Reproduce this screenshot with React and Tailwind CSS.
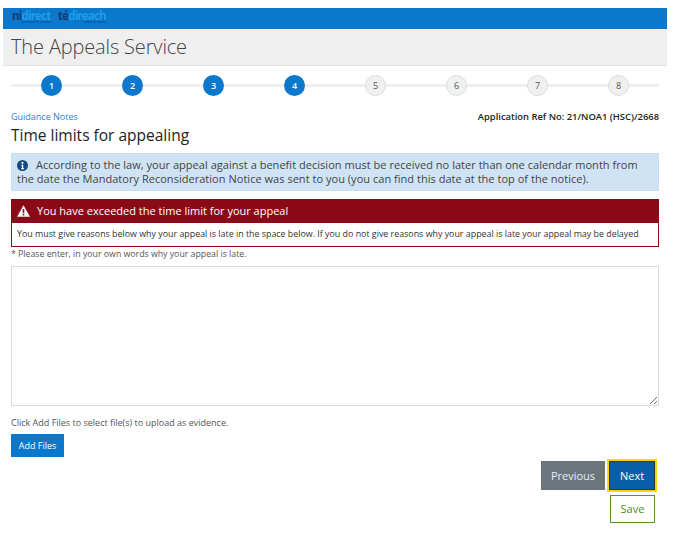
import React from 'react';

const steps = [1, 2, 3, 4, 5, 6, 7, 8];

const Step = ({ n }) => {
  const done = n <= 4;
  return (
    <div className="w-[81px] flex justify-center">
      <div
        className={
          done
            ? 'w-[21px] h-[21px] rounded-full bg-[#0b78cc] text-white text-[9px] font-semibold flex items-center justify-center'
            : 'w-[21px] h-[21px] rounded-full bg-[#f0f0f0] border border-[#dcdcdc] text-[#555] text-[9px] flex items-center justify-center'
        }
      >
        {n}
      </div>
    </div>
  );
};

const Logo = () => (
  <div className="flex items-start h-[21px] pl-[9px] pt-[3px] font-bold text-[11.5px] tracking-[-0.8px]">
    <div className="flex flex-col w-[39px]">
      <div className="flex leading-[10px] h-[10px]">
        <span className="text-[#14397a]">ni</span>
        <span className="text-[#1c9fe6]">direct</span>
      </div>
      <span className="text-[3px] leading-[3px] tracking-normal font-normal text-[#14397a] text-right">government services</span>
    </div>
    <div className="w-px h-[13px] bg-[#2a6fb5] mx-[3px]" />
    <div className="flex flex-col w-[48px]">
      <div className="flex leading-[10px] h-[10px]">
        <span className="text-[#14397a]">té</span>
        <span className="text-[#1c9fe6]">direach</span>
      </div>
      <span className="text-[3px] leading-[3px] tracking-normal font-normal text-[#14397a] text-right">seirbhísí rialtais</span>
    </div>
  </div>
);

export default function App() {
  return (
    <div className="bg-white min-h-[540px] pl-[3px] pt-2 pr-[6px] font-['Open_Sans',sans-serif] text-[#333]">
      <div className="bg-[#0b78cc]">
        <Logo />
      </div>
      <div className="bg-[#efefef] border-b border-[#e0e0e0] h-[37px] pl-[8px] flex items-center">
        <h1 className="text-[20px] font-light text-[#444] leading-none tracking-[-0.15px]">The Appeals Service</h1>
      </div>

      <div className="px-2">
        <div className="relative mt-[9px] flex">
          <div className="absolute left-0 right-0 top-[9px] h-[3px] bg-[#efefef]" />
          <div className="relative flex">
            {steps.map((n) => (
              <Step key={n} n={n} />
            ))}
          </div>
        </div>

        <div className="mt-[14px] flex justify-between items-center h-[14px]">
          <a className="text-[#2f7fd1] text-[9px]">Guidance Notes</a>
          <span className="text-[9.4px] font-semibold text-[#222]">Application Ref No: 21/NOA1 (HSC)/2668</span>
        </div>
        <h2 className="text-[15.5px] leading-[20px] text-[#222] mt-[1px]">Time limits for appealing</h2>

        <div className="mt-[8px] h-[38px] bg-[#cfe3f5] border border-[#c5dff3] pl-[5px] pt-[4px] text-[11px] leading-[14px] text-[#444] tracking-[0.03px]">
          <div className="flex items-center">
            <svg className="w-[11px] h-[11px] mr-[8px] shrink-0" viewBox="0 0 16 16">
              <circle cx="8" cy="8" r="8" fill="#14497f" />
              <circle cx="8" cy="4.2" r="1.5" fill="#fff" />
              <path d="M6.2 7h2.9v5H10.4v1.3H5.9V12h1.2V8.3H6.2z" fill="#fff" />
            </svg>
            <span>According to the law, your appeal against a benefit decision must be received no later than one calendar month from</span>
          </div>
          <div>the date the Mandatory Reconsideration Notice was sent to you (you can find this date at the top of the notice).</div>
        </div>

        <div className="mt-[8px] border border-[#8b0a17] border-t-0">
          <div className="bg-[#8b0a17] h-[24px] flex items-center pl-[5px] text-white text-[11px] font-medium">
            <svg className="w-[13px] h-[12px] mr-[7px]" viewBox="0 0 16 15">
              <path d="M8 0.4 16 14.6H0z" fill="#fff" />
              <path d="M7 5h2v5.2H7zM7 11.2h2v1.8H7z" fill="#8b0a17" />
            </svg>
            You have exceeded the time limit for your appeal
          </div>
          <div className="h-[23px] flex items-center pl-[5px] text-[8.87px] text-[#333] bg-white">
            You must give reasons below why your appeal is late in the space below. If you do not give reasons why your appeal is late your appeal may be delayed
          </div>
        </div>

        <p className="mt-[1px] text-[8.76px] leading-[13px] text-[#555]">* Please enter, in your own words why your appeal is late.</p>

        <textarea
          className="block w-full h-[140px] mt-[5px] border border-[#d8dcdf] bg-white outline-none"
          aria-label="Reason"
        />

        <p className="mt-[10px] text-[9px] leading-[13px] text-[#555]">Click Add Files to select file(s) to upload as evidence.</p>

        <button className="block mt-[5px] w-[53px] h-[23px] bg-[#0b78cc] text-white text-[9px] font-medium">Add Files</button>

        <div className="flex justify-end items-start gap-[4px] mt-[4px] pr-[4px]">
          <button className="w-[64px] h-[29px] pt-[2px] bg-[#6c757d] text-[#e8eef5] text-[11px]">Previous</button>
          <button className="w-[46px] h-[29px] pt-[2px] bg-[#0b5ea8] border border-[#333] outline-2 outline-[#ffd700] text-white text-[11px]">Next</button>
        </div>
        <div className="flex justify-end mt-[5px] pr-[4px]">
          <button className="w-[45px] h-[28px] border border-[#4d9a2a] bg-white text-[#4d8a2a] text-[11px]">Save</button>
        </div>
      </div>
    </div>
  );
}
